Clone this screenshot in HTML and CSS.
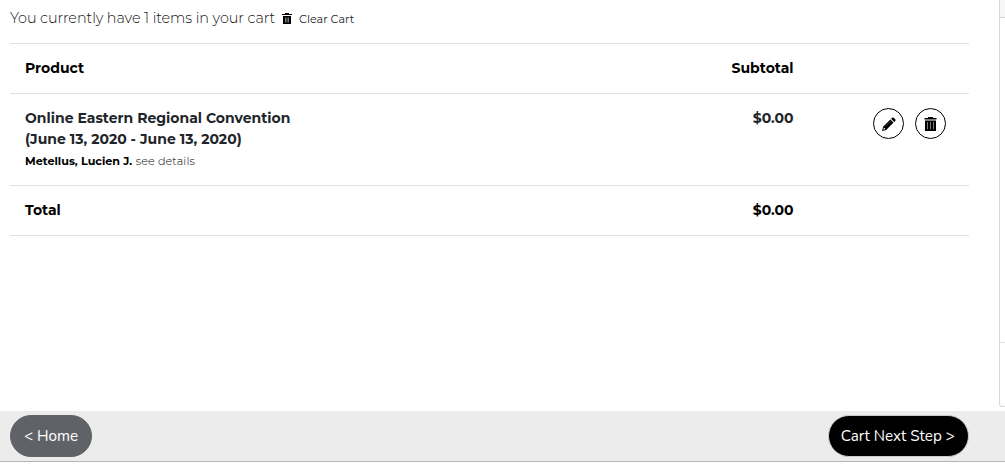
FILE: index.html
```
<!DOCTYPE html>
<html lang="en">
<head>
<meta charset="UTF-8">
<meta name="viewport" content="width=device-width, initial-scale=1">
<title>Cart</title>
<link rel="stylesheet" href="styles.css">
</head>
<body>
<div class="page">
  <main class="main">
    <section class="cart">
      <div class="cart-summary">
        <span class="cart-count">You currently have 1 items in your cart</span>
        <a class="clear-cart">
          <svg class="icon-clear" viewBox="0 0 10 11"><path d="M0 1h3V0h4v1h3v1H0zM1 3h8v8H1z"/><path class="slots" d="M3.5 4.5v5M5 4.5v5M6.5 4.5v5"/></svg>
          <span>Clear Cart</span>
        </a>
      </div>

      <div class="cart-table">
        <div class="row">
          <div class="col-product">Product</div>
          <div class="col-subtotal">Subtotal</div>
          <div class="col-actions"></div>
        </div>
        <div class="row row-item">
          <div class="col-product">
            <div class="item-name">Online Eastern Regional Convention</div>
            <div class="item-name">(June 13, 2020 - June 13, 2020)</div>
            <div class="item-person"><b>Metellus, Lucien J.</b> <a>see details</a></div>
          </div>
          <div class="col-subtotal dark">$0.00</div>
          <div class="col-actions">
            <button class="btn-round" type="button" aria-label="Edit">
              <svg viewBox="0 0 14 14"><path d="M10.1.8q.8-.8 1.6 0l1.5 1.5q.8.8 0 1.6l-1 1L9.1 1.8zM8.4 2.5l3.1 3.1-7.3 7.3L0 14l1.1-4.2zM1.9 10.5l-.6 2.2 2.2-.6z" fill-rule="evenodd"/><path class="shine" d="M3.4 9.4l5-5"/></svg>
            </button>
            <button class="btn-round" type="button" aria-label="Delete">
              <svg viewBox="0 0 14 14"><path d="M.5 1H4V0h5v1h3.5v1.5H.5zM1 3.5h11V14H1z"/><path class="slots" d="M3.5 5v7.3M6.5 5v7.3M9.5 5v7.3"/></svg>
            </button>
          </div>
        </div>
        <div class="row row-total">
          <div class="col-product">Total</div>
          <div class="col-subtotal">$0.00</div>
          <div class="col-actions"></div>
        </div>
      </div>
    </section>

    <aside class="side">
      <div class="side-head"></div>
      <div class="side-body"></div>
      <div class="side-foot"></div>
    </aside>
  </main>

  <footer class="footer">
    <button class="btn btn-home" type="button">&lt; Home</button>
    <button class="btn btn-next" type="button">Cart Next Step &gt;</button>
  </footer>
</div>
</body>
</html>
```
FILE: styles.css
```
* {
  box-sizing: border-box;
}
body {
  margin: 0;
  background: #fff;
  color: #000;
  font-family: Montserrat, Inter, sans-serif;
  font-size: 14px;
  line-height: 21px;
}
.page {
  height: 466px;
  display: flex;
  flex-direction: column;
  overflow: hidden;
}
.main {
  height: 411px;
  display: flex;
}
.cart {
  width: 999px;
  padding: 7px 30px 0 10px;
}
.cart-summary {
  height: 36px;
  display: flex;
  align-items: flex-start;
  white-space: nowrap;
}
.cart-count {
  width: 272px;
  color: #111;
  font-weight: 300;
  font-size: 14.4px;
  letter-spacing: -0.08px;
  line-height: 22px;
}
.clear-cart {
  display: flex;
  align-items: center;
  height: 24px;
  font-size: 11.2px;
  font-weight: 400;
  color: #212529;
}
.icon-clear {
  width: 10px;
  height: 11px;
  margin: 0 7px 1px 0;
}
.slots {
  fill: none;
  stroke: #999;
  stroke-width: 0.8;
}
.shine {
  fill: none;
  stroke: #777;
  stroke-width: 0.5;
}

/* table */
.cart-table {
  border-bottom: 1px solid #dee2e6;
}
.row {
  display: flex;
  height: 50px;
  padding-top: 14px;
  border-top: 1px solid #dee2e6;
  font-weight: 700;
}
.row-item {
  height: 92px;
}
.col-product {
  flex: 1;
  padding-left: 15px;
  white-space: nowrap;
}
.col-subtotal {
  width: 120px;
  text-align: right;
}
.col-actions {
  width: 175.5px;
  display: flex;
  justify-content: flex-end;
  align-items: flex-start;
  gap: 11px;
  padding-right: 23px;
}
.item-name,
.dark {
  color: #212529;
}
.item-person {
  font-size: 11.2px;
  line-height: 22px;
}
.item-person b {
  font-weight: 700;
}
.item-person a {
  margin-left: 0.5px;
  font-weight: 300;
  letter-spacing: 0.12px;
}
.btn-round {
  width: 31px;
  height: 31px;
  padding: 0;
  display: flex;
  align-items: center;
  justify-content: center;
  background: #fff;
  border: 1px solid #000;
  border-radius: 50%;
}
.btn-round svg {
  width: 14px;
  height: 14px;
}

/* side panel */
.side {
  flex: 1;
  height: 407px;
  display: flex;
  flex-direction: column;
  border-left: 1px solid #d9d9d9;
  border-bottom: 1px solid #d9d9d9;
  border-bottom-left-radius: 3px;
}
.side-head {
  height: 18px;
  background: #f7f7f7;
  border-bottom: 1px solid #d5d5d5;
}
.side-body {
  flex: 1;
}
.side-foot {
  height: 64px;
  border-top: 1px solid #dfdfdf;
}

/* footer */
.footer {
  height: 51px;
  display: flex;
  align-items: flex-start;
  justify-content: space-between;
  padding: 4px 36.5px 0 10px;
  background: #ececec;
  border-bottom: 1px solid #b5b5b5;
}
.btn {
  height: 42px;
  padding: 0;
  border: 1px solid #5f6368;
  border-radius: 21px;
  font-family: Nunito, Lato, sans-serif;
  font-size: 15.2px;
  font-weight: 400;
  color: #fff;
  white-space: nowrap;
}
.btn-home {
  width: 82px;
  background: #5f6368;
}
.btn-next {
  width: 140.5px;
  padding-right: 1px;
  background: #000;
  border-color: #ccc;
}
```
